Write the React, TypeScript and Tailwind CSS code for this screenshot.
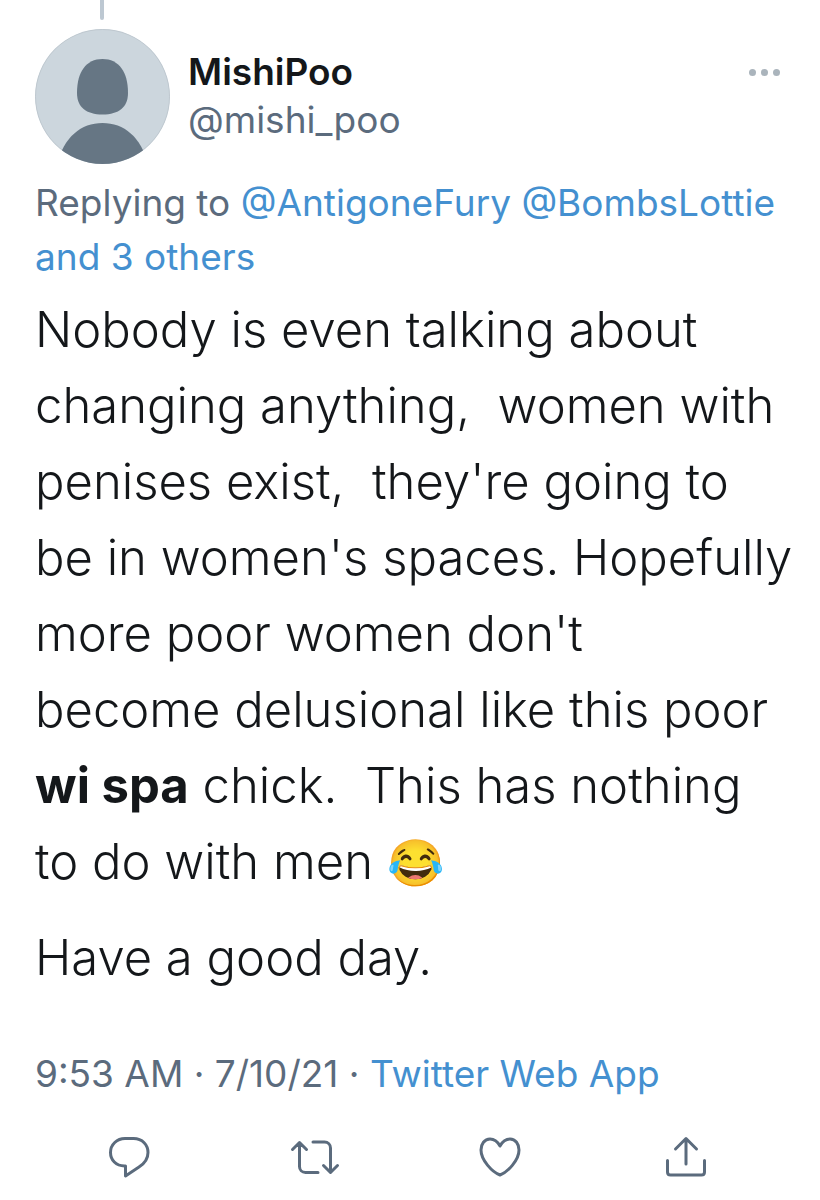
import type { ReactNode } from "react";

function Action({ label, children }: { label: string; children: ReactNode }) {
  return (
    <button type="button" aria-label={label} className="flex flex-1 justify-center">
      <svg
        viewBox="0 0 52 44"
        className="h-11 w-13"
        fill="none"
        stroke="currentColor"
        strokeWidth="3"
        strokeLinecap="round"
        strokeLinejoin="round"
        aria-hidden="true"
      >
        {children}
      </svg>
    </button>
  );
}

function Avatar() {
  return (
    <svg viewBox="0 0 135 135" className="size-[135px] shrink-0" role="img" aria-label="MishiPoo">
      <defs>
        <clipPath id="avatar-circle">
          <circle cx="67.5" cy="67.5" r="67.5" />
        </clipPath>
      </defs>
      <g clipPath="url(#avatar-circle)">
        <rect width="135" height="135" fill="#ccd6dd" />
        <path
          d="M67.5 30C84 30 93 43 93 64C93 78 84 85.500 67.500 85.500C51 85.500 42 78 42 64C42 43 51 30 67.500 30Z"
          fill="#667684"
        />
        <circle cx="67.500" cy="67.500" r="67" fill="none" stroke="#bfc8cf" strokeWidth="1" />
        <path d="M22 135C29 108 46 94 67.500 94S106 108 113 135Z" fill="#667684" />
      </g>
    </svg>
  );
}

export default function App() {
  return (
    <main className="min-h-screen bg-white font-['Inter',sans-serif] text-[#14171a]">
      <article>
        <div className="flex h-[29px] pl-[100px]">
          <div className="h-5 w-1 rounded-b-full bg-[#bdc8d2]" />
        </div>

        <header className="flex pr-9 pl-[35px]">
          <Avatar />
          <div className="ml-[18px] flex-1 pt-[19px] text-[37px] leading-12">
            <h1 className="font-semibold">MishiPoo</h1>
            <p className="text-[#5b6b7d]">@mishi_poo</p>
          </div>
          <button type="button" aria-label="More" className="flex h-[86px] items-center gap-[5px] px-1 text-[#aab4bc]">
            <span className="size-[7px] rounded-full bg-current" />
            <span className="size-[7px] rounded-full bg-current" />
            <span className="size-[7px] rounded-full bg-current" />
          </button>
        </header>

        <p className="mt-3 pr-7 pl-[35px] text-[37px] leading-[54px] text-[#5b6b7d]">
          Replying to{" "}
          <a href="#antigonefury" className="text-[#4490d0]">@AntigoneFury</a>{" "}
          <a href="#bombslottie" className="text-[#4490d0]">@BombsLottie</a>{" "}
          <a href="#others" className="text-[#4490d0]">and 3 others</a>
        </p>

        <div className="mt-2 flex flex-col gap-5 pr-6 pl-[35px] text-[49px] leading-[76px] font-light">
          <p className="whitespace-pre-wrap">
            {"Nobody is even talking about\nchanging anything,  women with\npenises exist,  they're going to\nbe in women's spaces. Hopefully\nmore poor women don't\nbecome delusional like this poor\n"}
            <strong className="font-bold">wi spa</strong>
            {" chick.  This has nothing\nto do with men "}
            <span className="text-[46px]">😂</span>
          </p>
          <p>Have a good day.</p>
        </div>

        <p className="mt-[51px] px-[35px] text-[37px] leading-[54px] text-[#5b6b7d]">
          9:53 AM · 7/10/21 ·{" "}
          <a href="#source" className="text-[#4490d0]">Twitter Web App</a>
        </p>

        <footer className="mt-[34px] flex pr-[41px] pl-9 text-[#5b6b7d]">
          <Action label="Reply">
            <path d="M22 3.500H30.500C39.500 3.500 45 10 45 17.500C45 24 41.500 28.500 36 32L22.500 41V31H21.500C13 31 7.500 25 7.500 17.500C7.500 9.500 14 3.500 22 3.500Z" />
          </Action>
          <Action label="Retweet">
            <path d="M3.500 14.500L10.500 7.500L17.500 14.500M10.500 7.500V31.500C10.500 35 13 37.500 16.500 37.500H29M24 7H35.500C39 7 41.500 9.500 41.500 13V37M34.500 30.500L41.500 37.500L48.500 30.500" />
          </Action>
          <Action label="Like">
            <path d="M26 11C23.500 6.500 20 4 16 4C10.500 4 7 9 7 15C7 25 18 37 26 40C34 37 45 25 45 15C45 9 41.500 4 36 4C32 4 28.500 6.500 26 11Z" />
          </Action>
          <Action label="Share">
            <path d="M26 29V4M15.500 14L26 3.500L36.500 14M7.500 25.500V37C7.500 39 8.500 40 10.500 40H41.500C43.500 40 44.500 39 44.500 37V25.500" />
          </Action>
        </footer>
      </article>
    </main>
  );
}
